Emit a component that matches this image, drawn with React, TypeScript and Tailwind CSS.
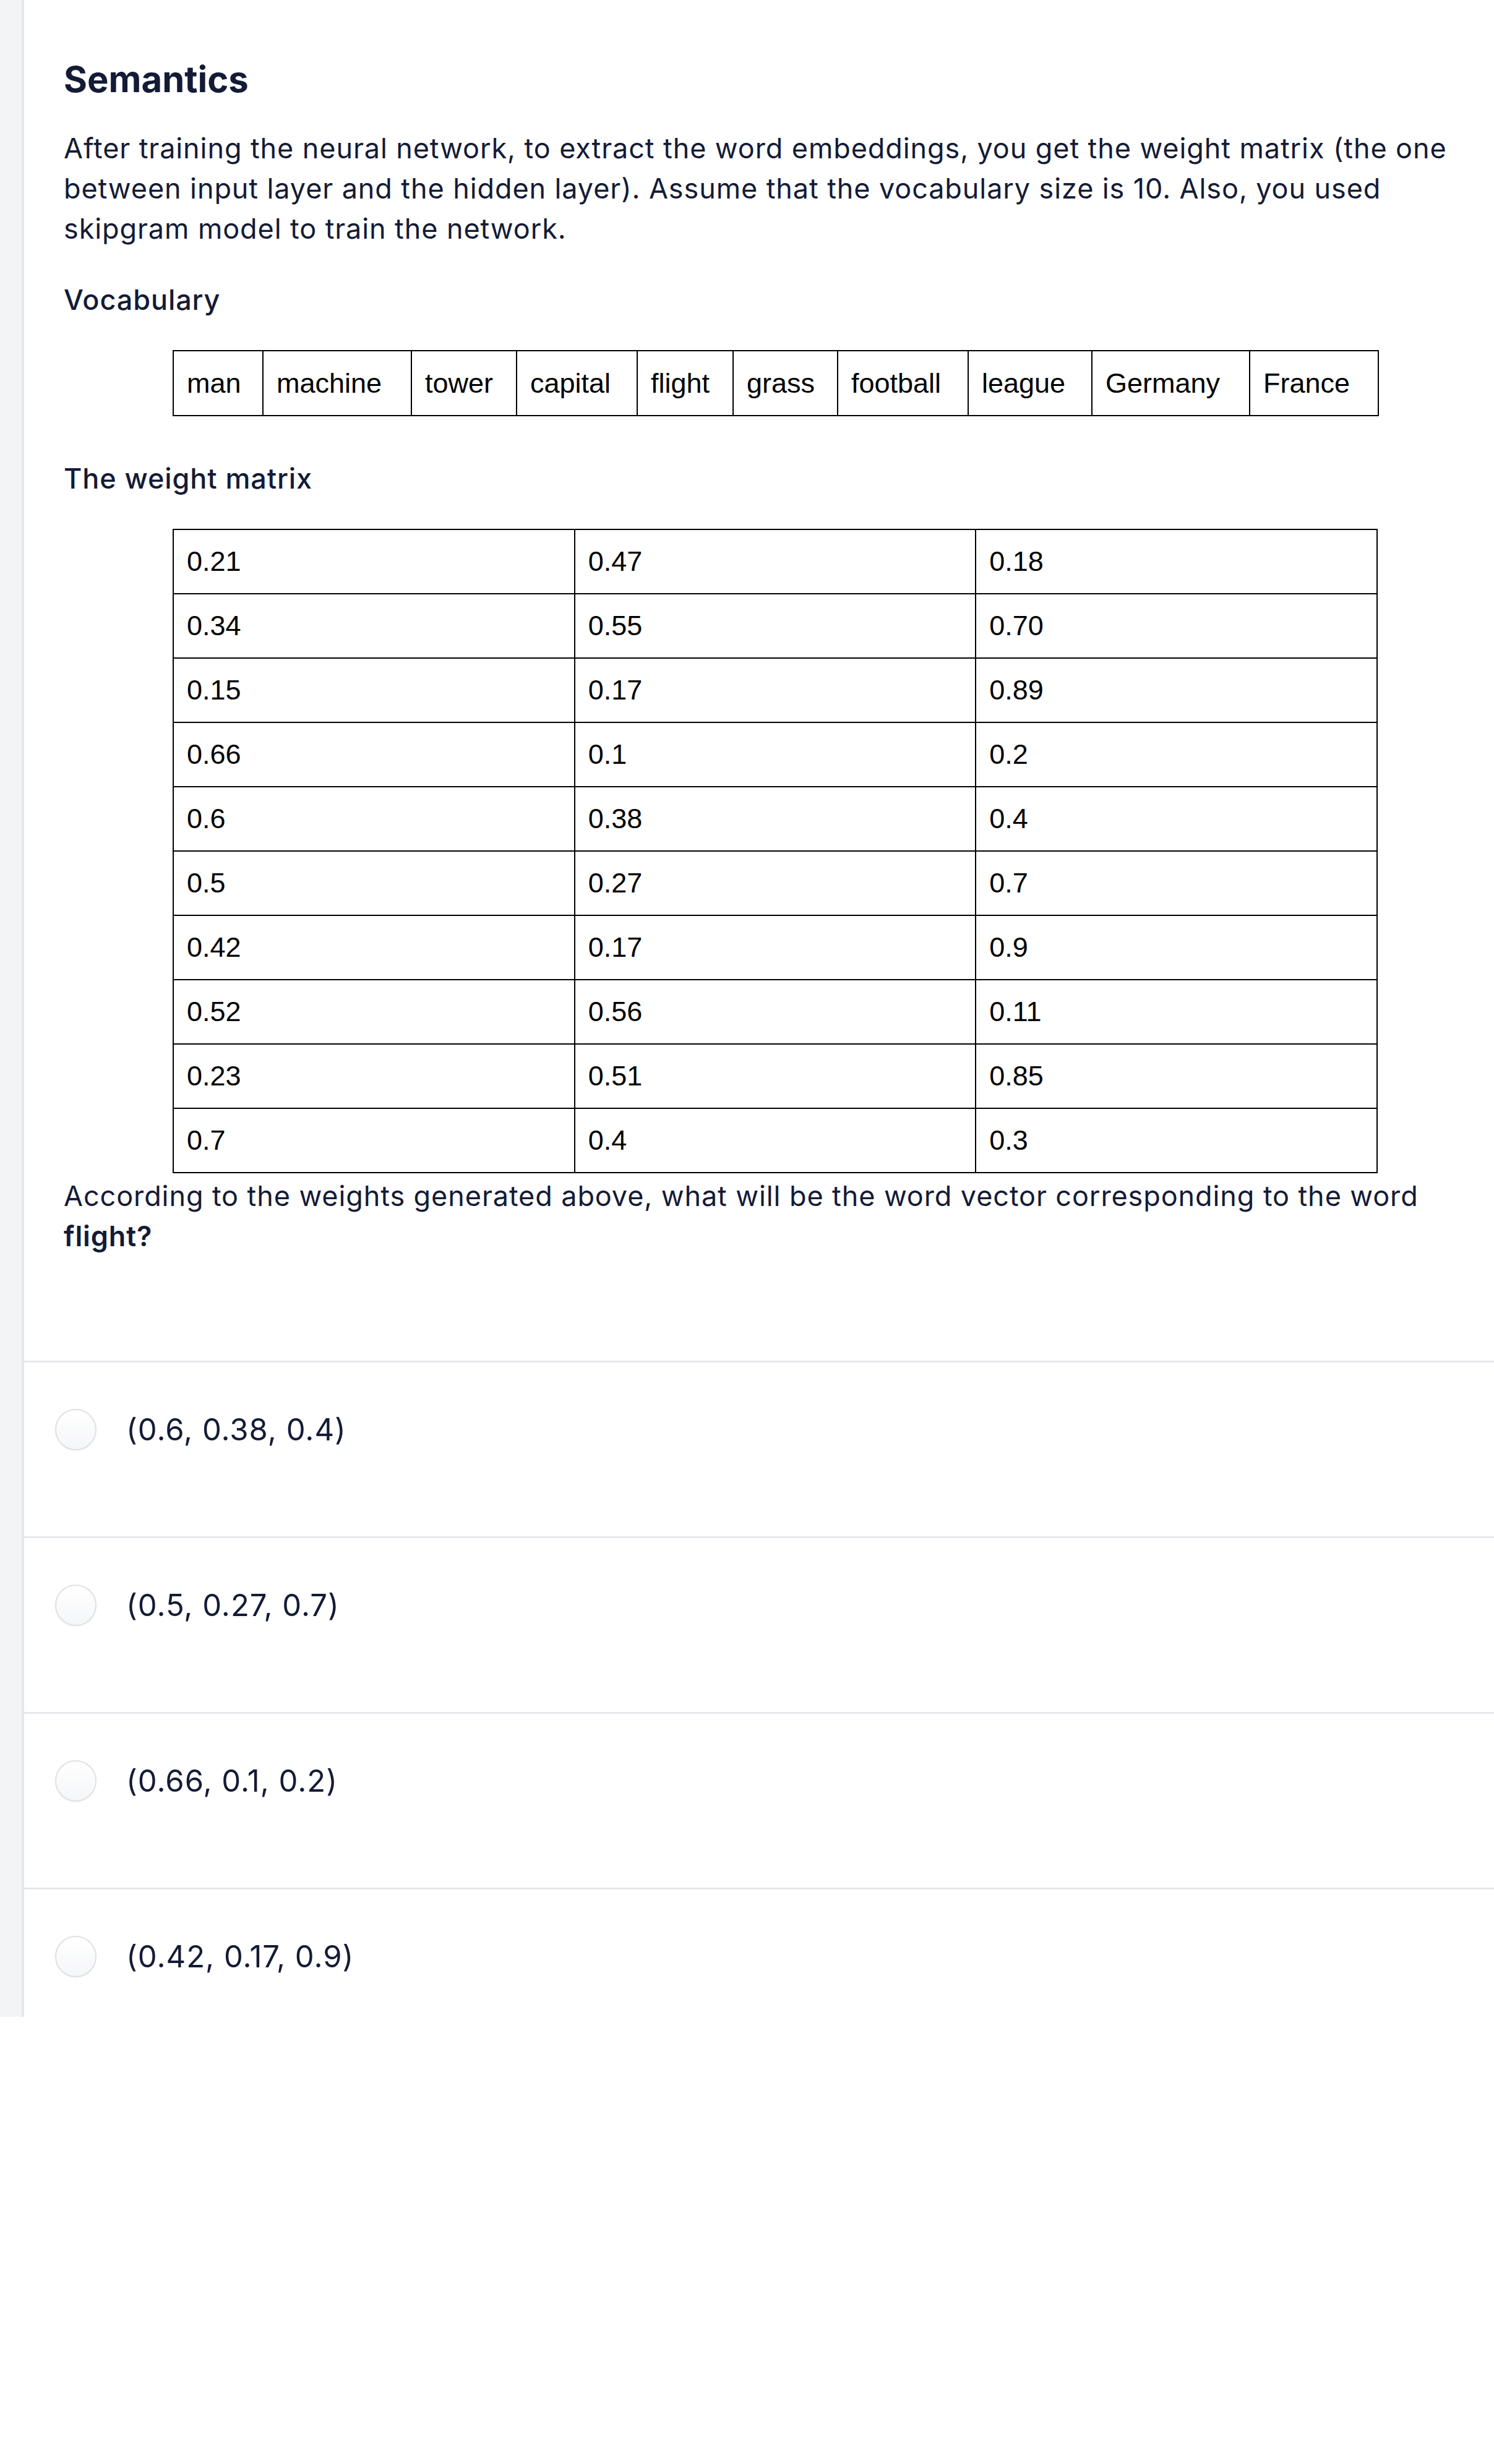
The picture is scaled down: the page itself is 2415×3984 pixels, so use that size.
const vocab = [
  { word: "man", w: "w-[145px]" },
  { word: "machine", w: "w-[240px]" },
  { word: "tower", w: "w-[170px]" },
  { word: "capital", w: "w-[195px]" },
  { word: "flight", w: "w-[155px]" },
  { word: "grass", w: "w-[169px]" },
  { word: "football", w: "w-[211px]" },
  { word: "league", w: "w-[200px]" },
  { word: "Germany", w: "w-[255px]" },
  { word: "France", w: "w-[208px]" },
];

const weights = [
  ["0.21", "0.47", "0.18"],
  ["0.34", "0.55", "0.70"],
  ["0.15", "0.17", "0.89"],
  ["0.66", "0.1", "0.2"],
  ["0.6", "0.38", "0.4"],
  ["0.5", "0.27", "0.7"],
  ["0.42", "0.17", "0.9"],
  ["0.52", "0.56", "0.11"],
  ["0.23", "0.51", "0.85"],
  ["0.7", "0.4", "0.3"],
];

const options = [
  "(0.6, 0.38, 0.4)",
  "(0.5, 0.27, 0.7)",
  "(0.66, 0.1, 0.2)",
  "(0.42, 0.17, 0.9)",
];

function Radio() {
  return (
    <span className="block w-[67px] h-[67px] shrink-0 rounded-full border-2 border-[#dfe1e7] bg-gradient-to-b from-white to-[#f5f6f8] shadow-[0_1px_2px_rgba(0,0,0,0.05)]" />
  );
}

export default function App() {
  return (
    <div className="min-h-[3984px] bg-white font-['Inter','Liberation_Sans',sans-serif] text-[#141b36]">
      <div className="flex">
        <div className="w-[39px] shrink-0 bg-[#f3f4f6] border-r-4 border-[#e5e7eb]" />

        <main className="flex-1">
          <section className="pl-[64px] pr-[64px] pt-[92px] pb-[169px]">
            <h1 className="text-[58px] leading-[72px] font-bold">Semantics</h1>

            <p className="mt-[43px] text-[45px] leading-[65px] tracking-[0.02em]">
              After training the neural network, to extract the word embeddings, you get the
              weight matrix (the one between input layer and the hidden layer). Assume that the
              vocabulary size is 10. Also, you used skipgram model to train the network.
            </p>

            <p className="mt-[50px] text-[45px] leading-[65px] tracking-[0.02em] font-medium">Vocabulary</p>

            <table className="mt-[49px] ml-[176px] table-fixed border-collapse font-['Liberation_Sans',Arial,sans-serif] text-[45px] text-black">
              <tbody>
                <tr className="h-[105px]">
                  {vocab.map((v) => (
                    <td key={v.word} className={`${v.w} border-2 border-black pl-[21px] align-middle`}>
                      {v.word}
                    </td>
                  ))}
                </tr>
              </tbody>
            </table>

            <p className="mt-[68px] text-[45px] leading-[65px] tracking-[0.02em] font-medium">The weight matrix</p>

            <table className="mt-[49px] ml-[176px] w-[1948px] table-fixed border-collapse font-['Liberation_Sans',Arial,sans-serif] text-[45px] text-black">
              <tbody>
                {weights.map((row, i) => (
                  <tr key={i} className="h-[104px]">
                    {row.map((cell, j) => (
                      <td key={j} className="border-2 border-black pl-[21px] align-middle">
                        {cell}
                      </td>
                    ))}
                  </tr>
                ))}
              </tbody>
            </table>

            <p className="mt-[4px] text-[45px] leading-[65px] tracking-[0.02em]">
              According to the weights generated above, what will be the word vector corresponding
              to the word <span className="font-semibold">flight?</span>
            </p>
          </section>

          {options.map((opt, i) => (
            <label
              key={opt}
              className={`flex items-center gap-[48px] border-t-[3px] border-[#e5e7eb] pl-[50px] pt-[75px] ${
                i === options.length - 1 ? "pb-[64px]" : "pb-[139px]"
              }`}
            >
              <Radio />
              <span className="text-[49px] leading-[67px] tracking-[0.02em]">{opt}</span>
            </label>
          ))}
        </main>
      </div>
    </div>
  );
}
